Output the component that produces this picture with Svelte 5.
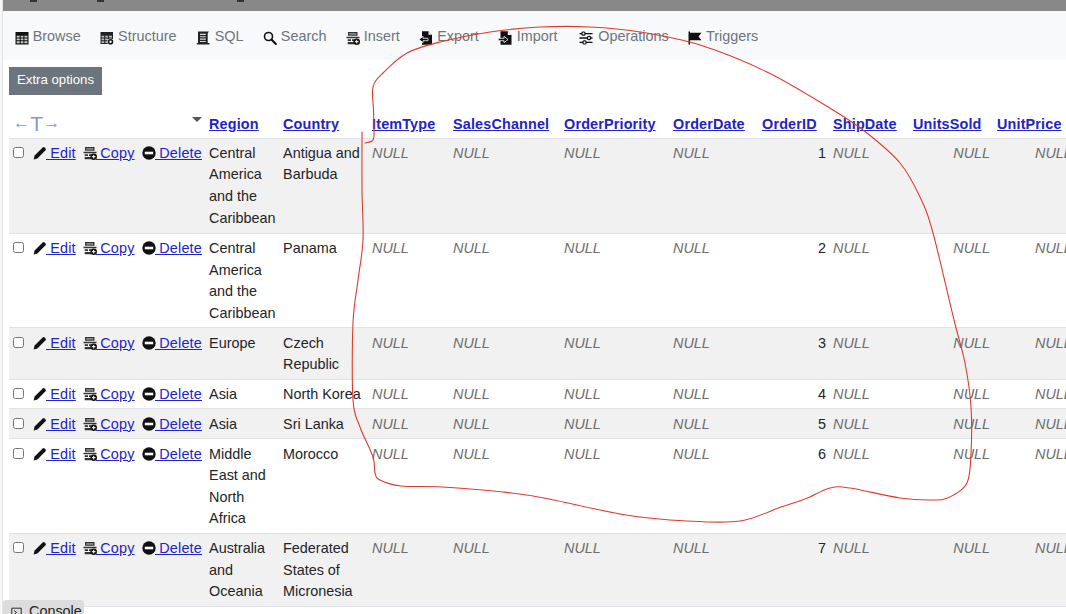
<script>
  const tabs = ['Browse', 'Structure', 'SQL', 'Search', 'Insert', 'Export', 'Import', 'Operations', 'Triggers'];
  const columns = ['Region', 'Country', 'ItemType', 'SalesChannel', 'OrderPriority', 'OrderDate', 'OrderID', 'ShipDate', 'UnitsSold', 'UnitPrice'];
  const rows = [
    { id: 1, region: 'Central America and the Caribbean', country: 'Antigua and Barbuda' },
    { id: 2, region: 'Central America and the Caribbean', country: 'Panama' },
    { id: 3, region: 'Europe', country: 'Czech Republic' },
    { id: 4, region: 'Asia', country: 'North Korea' },
    { id: 5, region: 'Asia', country: 'Sri Lanka' },
    { id: 6, region: 'Middle East and North Africa', country: 'Morocco' },
    { id: 7, region: 'Australia and Oceania', country: 'Federated States of Micronesia' }
  ];

  // hand-drawn red circle, traced from the screenshot
  const ink = [
    [362, 132], [362, 190], [363, 240], [358, 280], [353, 323], [353, 400], [360, 427], [373, 457], [375, 473],
    [380, 480], [401, 486], [442, 487], [503, 492], [544, 498], [626, 515], [687, 521], [740, 521], [781, 507],
    [805, 499], [830, 488], [850, 488], [900, 498], [933, 500], [950, 497], [967, 483], [971, 453], [971, 407],
    [965, 363], [954, 320], [933, 233], [920, 197], [900, 163], [867, 133], [833, 110], [767, 72], [700, 45],
    [640, 32], [590, 27], [540, 27], [490, 32], [440, 42], [407, 53], [383, 73], [373, 87], [373.5, 110],
    [374, 135], [372, 141], [365, 143]
  ];

  function smooth(pts) {
    let d = `M${pts[0][0]} ${pts[0][1]}`;
    for (let i = 0; i < pts.length - 1; i++) {
      const a = pts[Math.max(i - 1, 0)];
      const b = pts[i];
      const c = pts[i + 1];
      const e = pts[Math.min(i + 2, pts.length - 1)];
      d += ` C${b[0] + (c[0] - a[0]) / 6} ${b[1] + (c[1] - a[1]) / 6} ${c[0] - (e[0] - b[0]) / 6} ${c[1] - (e[1] - b[1]) / 6} ${c[0]} ${c[1]}`;
    }
    return d;
  }
</script>

{#snippet icon(name)}
  <svg class="icon" viewBox="0 0 14 14" aria-hidden="true">
    {#if name === 'Browse'}
      <path d="M.5 1h13v12.500H.5z" fill="#111" />
      <path d="M1.700 4.800h3v1.700h-3zM5.700 4.800h2.700v1.700H5.700zM9.400 4.800h3v1.700h-3zM1.700 7.500h3v1.700h-3zM5.700 7.500h2.700v1.700H5.700zM9.400 7.500h3v1.700h-3zM1.700 10.200h3v2h-3zM5.700 10.200h2.700v2H5.700zM9.400 10.200h3v2h-3z" fill="#ccc" />
    {:else if name === 'Structure'}
      <path d="M.5 1h12.500v12H.5z" fill="#222" />
      <path d="M1.500 4.800h2.700v1.700H1.500zM5.200 4.800h2.700v1.700H5.200zM8.900 4.800h3.100v1.700H8.900zM1.500 7.500h2.700v1.700H1.500zM5.200 7.500h2.700v1.700H5.200zM1.500 10.200h2.700V12H1.500zM5.200 10.200h2.700V12H5.200z" fill="#bbb" />
      <circle cx="10.500" cy="10.800" r="3.300" fill="#f8f9fa" />
      <circle cx="10.500" cy="10.800" r="2" fill="none" stroke="#111" stroke-width="1.600" />
    {:else if name === 'SQL'}
      <path d="M2 .5h11l-1.300 1.800V12H13.500v1.500H.8V12H2z" fill="#222" />
      <path d="M4 2.800h5.800v1.100H4zM4 5.200h5.800v1.100H4zM4 7.600h5.800v1.100H4zM4 10h5.800v1.100H4z" fill="#ddd" />
    {:else if name === 'Search'}
      <circle cx="5.500" cy="5.500" r="4" fill="none" stroke="#111" stroke-width="1.600" />
      <path d="M8.500 8.500l4.300 4.400" stroke="#111" stroke-width="2.100" stroke-linecap="round" />
    {:else if name === 'Insert' || name === 'Copy'}
      <path d="M2 1h9.500v3.800H2zM.5 5.800h13v1.500H.5zM1.700 8.300h3.300v1.700H1.700zM6 8.300h2v1.700H6zM1.700 11h6.300v2.300H1.700z" fill="#333" />
      <path d="M3.200 2.400h7v1.100h-7z" fill="#bbb" />
      <circle cx="10.700" cy="10.700" r="3.300" fill="#111" />
      <path d="M10.700 8.900v3.600M8.900 10.700h3.600" stroke="#fff" stroke-width="1" />
    {:else if name === 'Export'}
      <path d="M3 .3h6.500L13 3.800v9.900H3z" fill="#111" />
      <path d="M9.500.3v3.500H13z" fill="#f8f9fa" />
      <path d="M0 8.500L4 5.300v2h5v2.400H4v2z" fill="#111" stroke="#f8f9fa" stroke-width=".8" />
    {:else if name === 'Import'}
      <path d="M2.500.3h7.300L13.500 4v9.700h-11z" fill="#111" />
      <path d="M9.800.3V4h3.700z" fill="#f8f9fa" />
      <path d="M10 8.500L6 5.300v2H.3v2.400H6v2z" fill="#111" stroke="#f8f9fa" stroke-width=".8" />
    {:else if name === 'Operations'}
      <path d="M.5 2.600h13M.5 7h13M.5 11.400h13" stroke="#111" stroke-width="1.400" />
      <rect x="3" y="1" width="3" height="3.200" rx="1" fill="#f8f9fa" stroke="#111" stroke-width="1.200" />
      <rect x="8.500" y="5.400" width="3" height="3.200" rx="1" fill="#f8f9fa" stroke="#111" stroke-width="1.200" />
      <rect x="4" y="9.800" width="3" height="3.200" rx="1" fill="#f8f9fa" stroke="#111" stroke-width="1.200" />
    {:else if name === 'Triggers'}
      <path d="M.5 .5h1.500v13H.5z" fill="#111" />
      <path d="M2 1.800h11.500l-3 3.700 3 3.700H2z" fill="#111" />
    {:else if name === 'Edit'}
      <path d="M.6 13.400l1-3.800L9.700 1.500a1.300 1.300 0 0 1 1.800 0l1 1a1.300 1.300 0 0 1 0 1.800L4.400 12.400z" fill="#111" />
    {:else if name === 'Delete'}
      <circle cx="7" cy="7" r="6.700" fill="#111" />
      <path d="M2.800 5.700h8.400v2.600H2.800z" fill="#fff" />
    {/if}
  </svg>
{/snippet}

<div class="page">
  <div class="edge"></div>
  <main>
    <div class="topbar"><i></i><i></i><i></i></div>

    <nav>
      {#each tabs as tab}
        <span class="tab">{@render icon(tab)}{tab}</span>
      {/each}
    </nav>

    <button class="extra">Extra options</button>

    <table>
      <colgroup>
        <col style="width: 20px" />
        <col style="width: 50px" />
        <col style="width: 59px" />
        <col style="width: 67px" />
        <col style="width: 74px" />
        <col style="width: 89px" />
        <col style="width: 81px" />
        <col style="width: 111px" />
        <col style="width: 109px" />
        <col style="width: 89px" />
        <col style="width: 71px" />
        <col style="width: 80px" />
        <col style="width: 84px" />
        <col style="width: 82px" />
      </colgroup>
      <thead>
        <tr>
          <th colspan="4">
            <div class="resize">
              <span class="arrows"><span>←</span><span class="tee">T</span><span>→</span></span>
              <span class="caret"></span>
            </div>
          </th>
          {#each columns as col}
            <th><a href="#sort">{col}</a></th>
          {/each}
        </tr>
      </thead>
      <tbody>
        {#each rows as row}
          <tr>
            <td><input type="checkbox" /></td>
            <td class="act">{@render icon('Edit')}<a href="#edit">&nbsp;Edit</a></td>
            <td class="act">{@render icon('Copy')}<a href="#copy">&nbsp;Copy</a></td>
            <td class="act">{@render icon('Delete')}<a href="#delete">&nbsp;Delete</a></td>
            <td>{row.region}</td>
            <td>{row.country}</td>
            <td class="null">NULL</td>
            <td class="null">NULL</td>
            <td class="null">NULL</td>
            <td class="null">NULL</td>
            <td class="num">{row.id}</td>
            <td class="null">NULL</td>
            <td class="null num">NULL</td>
            <td class="null">NULL</td>
          </tr>
        {/each}
      </tbody>
    </table>
  </main>
</div>

<div class="console">
  <svg class="icon small" viewBox="0 0 14 14" aria-hidden="true">
    <path d="M1 1.500h12v11H1z" fill="none" stroke="#222" stroke-width="1.200" />
    <path d="M4 4.500L7 7 4 9.500" fill="none" stroke="#222" stroke-width="1.200" />
  </svg>
  Console
</div>

<svg class="ink" width="1066" height="614" viewBox="0 0 1066 614" aria-hidden="true">
  <path d={smooth(ink)} fill="none" stroke="#de3b30" stroke-width="1.100" stroke-linecap="round" />
</svg>

<style>
  :global(html),
  :global(body) {
    margin: 0;
    height: 100%;
    overflow: hidden;
    background: #fff;
  }

  .page {
    display: flex;
    width: 1066px;
    height: 614px;
    overflow: hidden;
    font-family: 'Liberation Sans', Arial, sans-serif;
    font-size: 14.4px;
    line-height: 21.6px;
    color: #212529;
  }

  .edge {
    flex: 0 0 2px;
    background: #f7f7f7;
    border-right: 1px solid #e2e2e2;
  }

  main {
    flex: 1;
    min-width: 0;
  }

  .topbar {
    height: 11px;
    background: #888;
    display: flex;
    gap: 60px;
    padding-left: 27px;
  }

  .topbar i {
    width: 7px;
    height: 2px;
    background: #333;
  }

  .topbar i:last-child {
    margin-left: 73px;
  }

  nav {
    height: 49px;
    box-sizing: border-box;
    background: #f8f9fa;
    display: flex;
    align-items: center;
    gap: 19.7px;
    padding: 2px 0 0 12px;
    margin-bottom: 7px;
    color: #6c757d;
  }

  .tab {
    display: inline-flex;
    align-items: center;
    gap: 3.7px;
    white-space: nowrap;
  }

  .tab:nth-child(3) {
    gap: 4.5px;
  }

  .tab:nth-child(7) {
    margin-right: 2px;
    gap: 4.3px;
  }

  .tab:nth-child(8) {
    gap: 5px;
  }

  .tab .icon {
    margin-top: 2px;
  }

  .icon {
    width: 14px;
    height: 14px;
    flex: none;
    vertical-align: -2px;
  }

  .act .icon {
    margin: 0 -0.5px;
  }

  .act a {
    letter-spacing: 0.2px;
  }

  .extra {
    display: block;
    margin: 0 0 15px 6px;
    width: 93px;
    height: 28px;
    padding: 0 0 2px;
    border: 0;
    background: #6c757d;
    color: #fff;
    font: 400 13.2px/26px 'Liberation Sans', Arial, sans-serif;
  }

  table {
    table-layout: fixed;
    border-collapse: collapse;
    width: 1066px;
    margin-left: 6px;
  }

  th {
    height: 28px;
    box-sizing: border-box;
    padding: 2px 4px 0;
    text-align: left;
    font-weight: 700;
    white-space: nowrap;
    vertical-align: middle;
    letter-spacing: 0.15px;
  }

  td {
    padding: 4.3px 4px 2.9px;
    vertical-align: top;
    border-top: 1px solid #dee2e6;
  }

  tbody tr:first-child td {
    padding-bottom: 3.6px;
  }

  tbody tr:nth-child(odd) {
    background: #f1f1f1;
  }

  tbody tr:last-child {
    border-bottom: 1px solid #dee2e6;
  }

  a {
    color: #2323c8;
  }

  .resize {
    display: flex;
    justify-content: space-between;
    align-items: center;
    margin-right: -1px;
  }

  .arrows {
    display: inline-flex;
    align-items: center;
    margin-top: -3px;
    color: #7f9bd0;
    font-weight: 400;
    font-size: 17px;
  }

  .tee {
    font-size: 21px;
    line-height: 21px;
  }

  .caret {
    width: 0;
    height: 0;
    margin-top: -10px;
    border-left: 5.500px solid transparent;
    border-right: 5.500px solid transparent;
    border-top: 5px solid #555;
  }

  input[type='checkbox'] {
    width: 11px;
    height: 11px;
    margin: 4px 0 0;
    display: block;
  }

  .act {
    white-space: nowrap;
  }

  .null {
    color: #6e6e6e;
    font-style: italic;
    white-space: nowrap;
  }

  .num {
    text-align: right;
    padding-right: 3px;
  }

  td:last-child {
    padding-left: 42px;
  }

  .console {
    position: fixed;
    left: 3px;
    bottom: 0;
    width: 81px;
    height: 14px;
    box-sizing: border-box;
    padding-left: 8px;
    background: #dcdcdc;
    border-radius: 3px 3px 0 0;
    font-family: 'Liberation Sans', Arial, sans-serif;
    font-size: 14.4px;
    line-height: 22px;
    color: #222;
    overflow: hidden;
    white-space: nowrap;
  }

  .small {
    width: 11px;
    height: 11px;
    margin-right: 3px;
  }

  .ink {
    position: fixed;
    left: 0;
    top: 0;
    pointer-events: none;
  }
</style>
